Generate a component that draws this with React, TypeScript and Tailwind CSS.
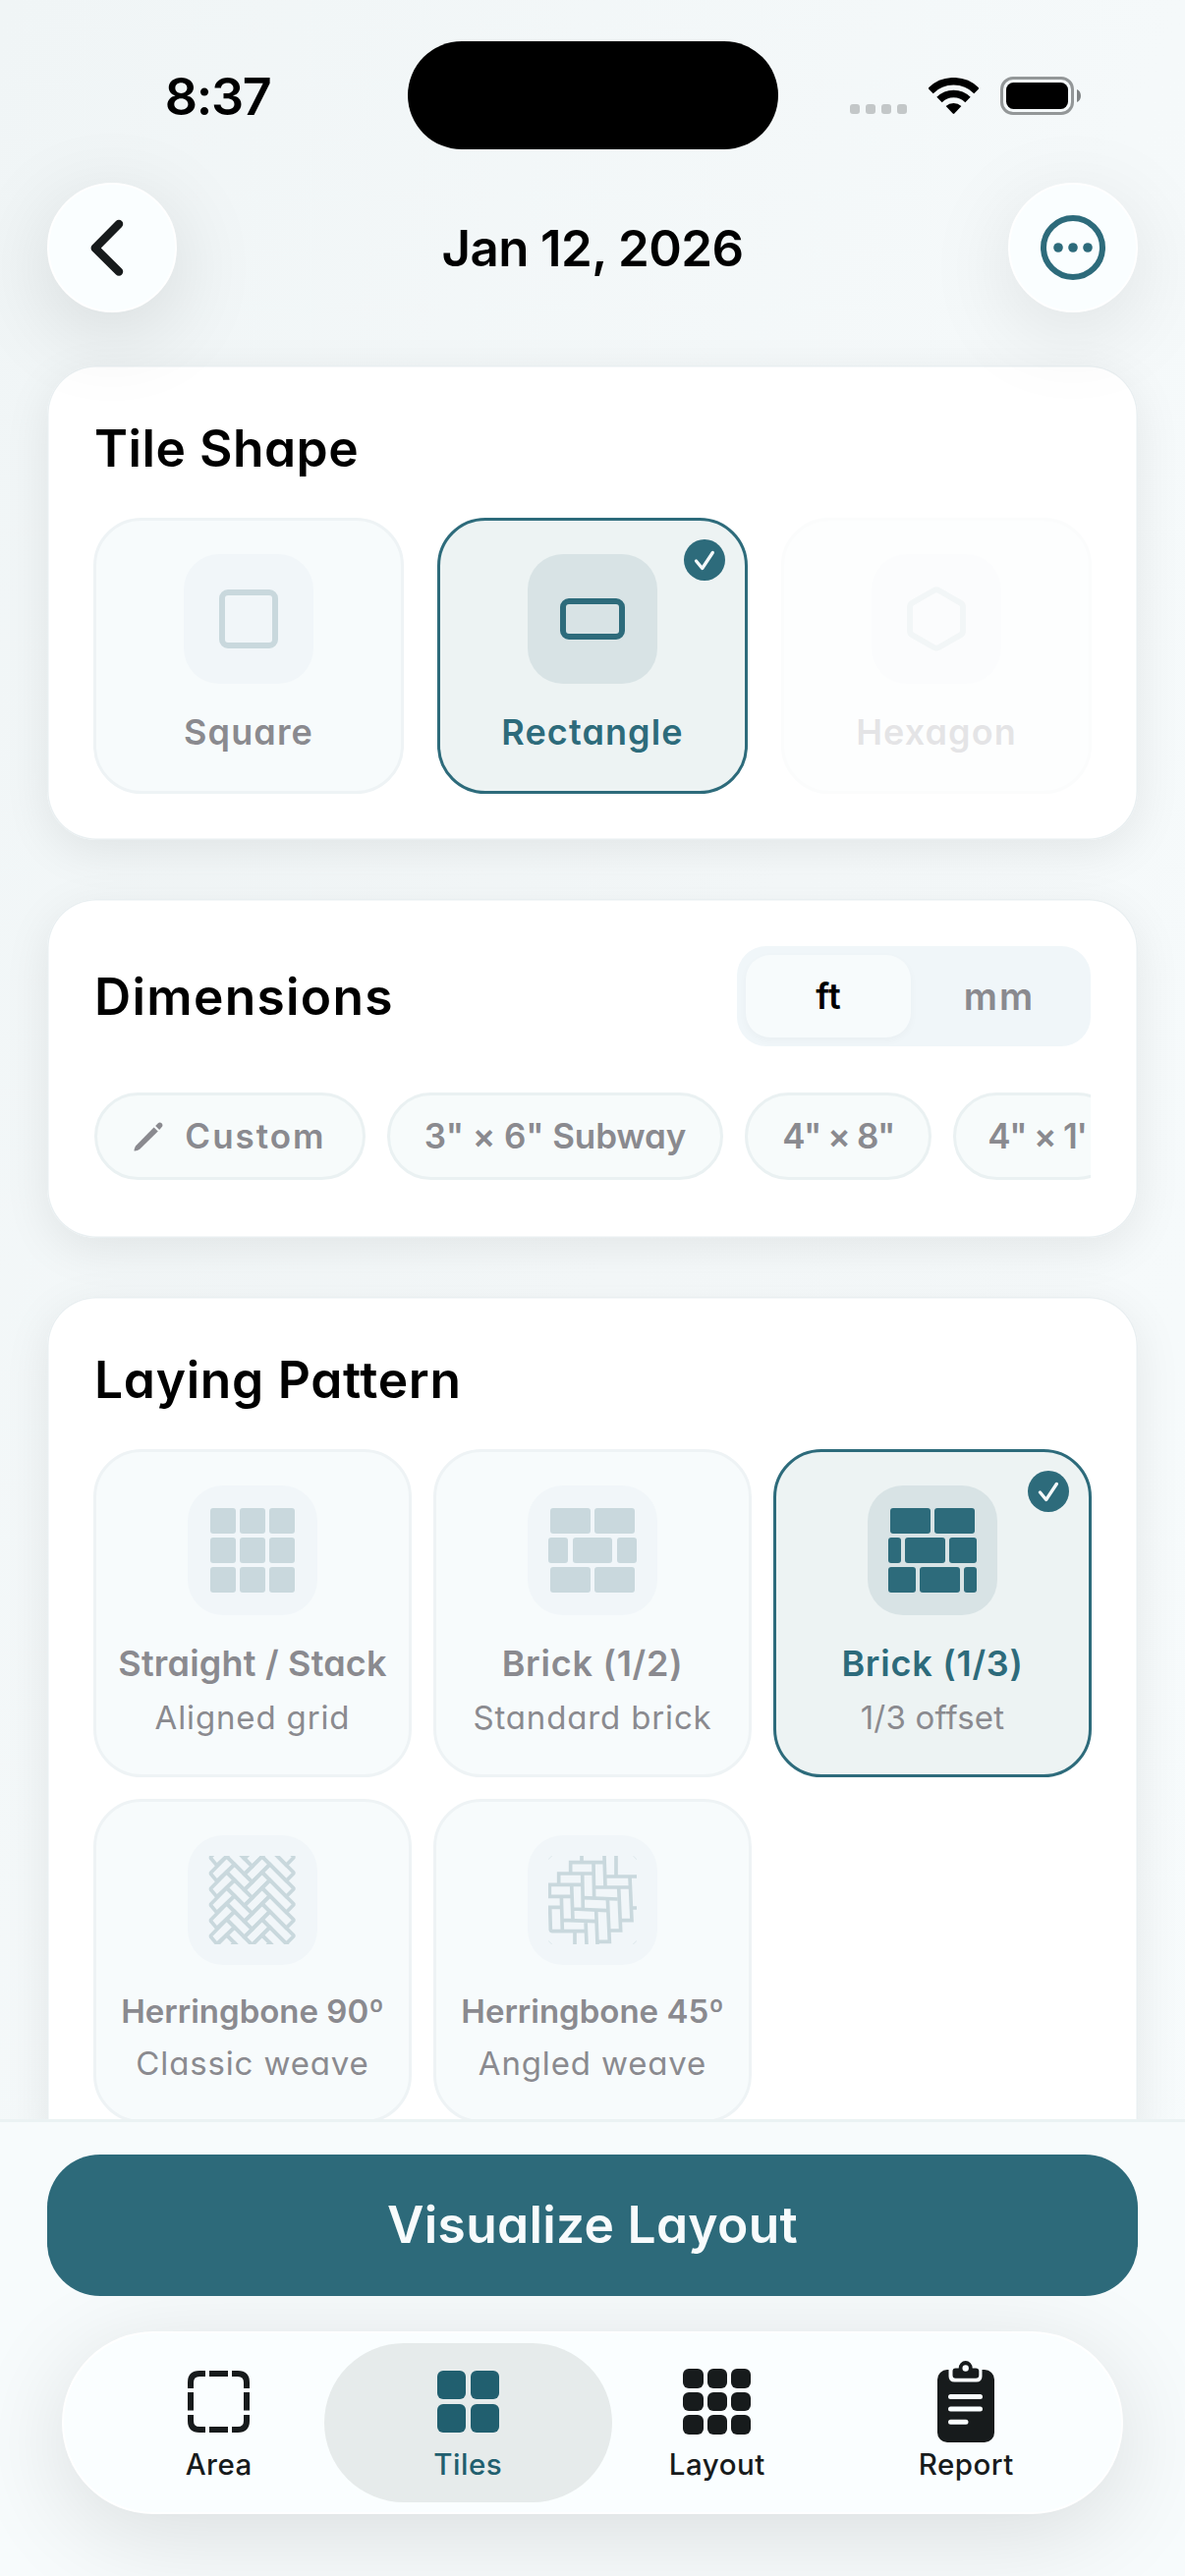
import React from 'react';
import clsx from 'clsx';

const StatusBar = () => (
  <div className="h-[186px] flex items-start relative">
    <div className="w-[415px] h-[196px] flex justify-center pl-[28px]">
      <span className="text-[52px] leading-[197px] font-semibold tracking-[-1.3px]">8:37</span>
    </div>
    <div className="mt-[42px] w-[377px] h-[110px] rounded-[55px] bg-black"></div>
    <div className="ml-[73px] mt-[78px] h-[39px] flex items-center">
      <div className="flex gap-[6px] mt-[27px]">
        {[0, 1, 2, 3].map((dot) => (
          <div key={dot} className="w-[10px] h-[10px] rounded-[3px] bg-[#c3c7c8]"></div>
        ))}
      </div>
      <svg className="ml-[22px]" width="51" height="38" viewBox="0 0 51 38" fill="none">
        <path d="M2 13.5A33.2 33.2 0 0 1 49 13.5" stroke="#000" strokeWidth="7.6" />
        <path d="M11 22.5A20.5 20.5 0 0 1 40 22.5" stroke="#000" strokeWidth="7.6" />
        <path d="M17.6 29.1A11.7 11.7 0 0 1 33.4 29.1L26.3 36.6Q25.5 37.4 24.7 36.6Z" fill="#000" />
      </svg>
      <svg className="ml-[22px]" width="83" height="39" viewBox="0 0 83 39">
        <rect x="1.5" y="1.5" width="72" height="36" rx="11.5" fill="none" stroke="#939798" strokeWidth="3" />
        <rect x="6" y="6" width="63" height="27" rx="7.5" fill="#000" />
        <path d="M78 13C83.3 14.5 83.3 24.5 78 26Z" fill="#7f8384" />
      </svg>
    </div>
  </div>
);

const Header = () => (
  <header className="relative z-10 shrink-0 h-[318px]">
    <StatusBar />
    <div className="h-[132px] px-12 flex items-center justify-between">
      <button className="w-[132px] h-[132px] rounded-full bg-[#fafeff] flex items-center justify-center border-2 border-white shadow-[0_20px_90px_rgba(0,0,0,0.12)]">
        <svg className="-ml-[10px]" width="34" height="58" viewBox="0 0 34 58" fill="none">
          <path d="M29 5L4.8 29.5L29 53.5" stroke="#171b1c" strokeWidth="8.5" strokeLinecap="round" strokeLinejoin="round" />
        </svg>
      </button>
      <h1 className="text-[51px] leading-[132px] pt-[2px] font-semibold tracking-[-0.6px]">Jan 12, 2026</h1>
      <button className="w-[132px] h-[132px] rounded-full bg-[#fafeff] flex items-center justify-center border-2 border-white shadow-[0_20px_90px_rgba(0,0,0,0.1)]">
        <svg width="66" height="66" viewBox="0 0 66 66">
          <circle cx="33" cy="33" r="30" fill="none" stroke="#2d6b7b" strokeWidth="6" />
          <circle cx="18" cy="33" r="4.8" fill="#2d6b7b" />
          <circle cx="33" cy="33" r="4.8" fill="#2d6b7b" />
          <circle cx="48" cy="33" r="4.8" fill="#2d6b7b" />
        </svg>
      </button>
    </div>
  </header>
);

type CardProps = { children: React.ReactNode };

const Card = ({ children }: CardProps) => (
  <section className="bg-white rounded-[50px] p-12 shadow-[inset_0_0_0_1.5px_#e9eff1,0_12px_48px_rgba(0,0,0,0.08)]">
    {children}
  </section>
);

const CheckBadge = () => (
  <svg className="absolute top-[21px] right-[22px]" width="42" height="42" viewBox="0 0 42 42" fill="none">
    <circle cx="21" cy="21" r="21" fill="#2d6b7b" />
    <path d="M12.5 22L18.7 29.5L29.3 13.5" stroke="#f4f9fa" strokeWidth="3.3" strokeLinecap="round" strokeLinejoin="round" />
  </svg>
);

type OptionProps = {
  label: string;
  caption?: string;
  icon: React.ReactNode;
  selected?: boolean;
  disabled?: boolean;
  labelClass?: string;
  captionClass?: string;
};

const Option = ({ label, caption, icon, selected, disabled, labelClass, captionClass }: OptionProps) => (
  <button
    className={clsx(
      'relative flex flex-col items-center py-9 rounded-[48px] outline-[3px] outline-solid outline-offset-[-2px]',
      selected ? 'bg-[#edf3f3] outline-[#2d6b7b]' : 'bg-[#f7fbfc] outline-[#eef3f5]',
      disabled && 'opacity-[0.22]'
    )}
  >
    <div
      className={clsx(
        'w-[132px] h-[132px] rounded-[36px] flex items-center justify-center',
        selected ? 'bg-[#d8e3e5] text-[#2d6b7b]' : 'bg-[#f1f6f9] text-[#c9d8dd]'
      )}
    >
      {icon}
    </div>
    <span
      className={clsx(
        'mt-[23px] font-semibold whitespace-nowrap',
        labelClass || 'text-[36px] leading-[52px] tracking-[1.1px]',
        selected ? 'text-[#2d6b7b]' : 'text-[#8a8a8f]'
      )}
    >
      {label}
    </span>
    {caption && (
      <span
        className={clsx(
          'mt-[5px] text-[33px] leading-[48px] text-[#8a8a8f] whitespace-nowrap',
          captionClass || 'tracking-[0.85px]'
        )}
      >
        {caption}
      </span>
    )}
    {selected && <CheckBadge />}
  </button>
);

const SquareIcon = () => <div className="w-[60px] h-[60px] rounded-[9px] border-[6px] border-current"></div>;

const RectangleIcon = () => <div className="w-[66px] h-[42px] rounded-[9px] border-[6px] border-current"></div>;

const HexagonIcon = () => (
  <svg width="60" height="66" viewBox="0 0 60 66" fill="none">
    <path
      d="M27.5 4Q30 2.6 32.5 4L54.5 16.6Q57 18 57 21V45Q57 48 54.5 49.4L32.5 62Q30 63.4 27.5 62L5.5 49.4Q3 48 3 45V21Q3 18 5.5 16.6Z"
      stroke="currentColor"
      strokeWidth="6"
    />
  </svg>
);

// Each row is a list of [x, width] pairs on a 90 unit wide grid
const BrickIcon = ({ rows }: { rows: number[][][] }) => (
  <svg width="90" height="90" viewBox="0 0 90 90" fill="currentColor">
    {rows.map((row, i) =>
      row.map(([x, width]) => <rect key={`${i}-${x}`} x={x} y={2 + i * 30} width={width} height="26" rx="3" />)
    )}
  </svg>
);

const stackRow = [[2, 26], [32, 26], [62, 26]];
const evenRow = [[2, 41], [47, 41]];
const halfRow = [[0, 20], [25, 40], [70, 20]];

const Herringbone90Icon = () => {
  const steps = [-2, -1, 0, 1, 2, 3, 4, 5];
  return (
    <svg width="90" height="90" viewBox="0 0 270 270" fill="none" stroke="currentColor" strokeWidth="11">
      <defs>
        <clipPath id="weave">
          <rect x="2" y="0" width="264" height="270" />
        </clipPath>
      </defs>
      <g clipPath="url(#weave)">
        {steps.map((n) => (
          <g key={n} transform={`translate(2 ${n * 48})`}>
            <path d="M4 53L54 2L78 26L24 77Z" />
            <path d="M54 50L78 26L132 80L108 104Z" />
            <path d="M108 56L162 2L186 26L132 80Z" />
            <path d="M162 50L186 26L260 100L236 124Z" />
          </g>
        ))}
      </g>
    </svg>
  );
};

const Herringbone45Icon = () => (
  <svg width="90" height="90" viewBox="0 0 270 270" fill="none" stroke="currentColor" strokeWidth="11">
    <path d="M102 0V20M171 0L174 95M207 0V60M68 54V20H174M138 20L140 128M32 88V54H138M104 54L106 164" />
    <path d="M0 88H106M4 84V124H76M71 86L75 196M174 63H270M140 96H252M106 128L212 132M74 162L180 167" />
    <path d="M42 196L146 200M0 157H40M40 124L43 230M5 156L7 226Q8 230 12 230H115M114 196L117 270M81 232V270" />
    <path d="M146 164L150 270M181 130L187 262H150M215 96L221 228H188M249 65L255 197H220M254 159H270" />
    <path d="M0 11L11 0M259 0L270 11M0 259L11 270M259 270L270 259" strokeWidth="1.5" />
  </svg>
);

const TileShape = () => (
  <Card>
    <h2 className="text-[51.5px] leading-[72px] font-semibold tracking-[0.5px]">Tile Shape</h2>
    <div className="mt-9 grid grid-cols-3 gap-9">
      <Option label="Square" icon={<SquareIcon />} />
      <Option label="Rectangle" icon={<RectangleIcon />} selected />
      <Option label="Hexagon" icon={<HexagonIcon />} disabled />
    </div>
  </Card>
);

const PencilIcon = () => (
  <svg width="30" height="30" viewBox="0 0 30 30" fill="#8a8a8f">
    <path d="M0.6 29.4C0.2 28.8 1.3 25.2 2.2 24.2L20.6 5.4L24.8 9.5L6.2 27.8C5.2 28.7 1.3 29.9 0.6 29.4Z" />
    <path d="M22.2 3.9L24.9 1.2C26 0.1 27.4 0.2 28.5 1.2C29.7 2.4 29.8 3.9 28.8 5L26.2 7.9Z" />
  </svg>
);

const chipClass =
  'shrink-0 h-[89px] rounded-full border-[3px] border-[#eaf1f2] bg-[#f7fbfb] flex items-center justify-center text-[35px] font-semibold text-[#8a8a8f] whitespace-nowrap';

const Dimensions = () => (
  <Card>
    <div className="h-[102px] flex items-center justify-between">
      <h2 className="text-[51.5px] leading-[72px] font-semibold tracking-[1.3px]">Dimensions</h2>
      <div className="w-[360px] h-[102px] p-[9px] rounded-[30px] bg-[#f0f6f9] flex text-[36px] font-semibold">
        <div className="w-[168px] rounded-[25px] bg-[#f7fbfc] flex items-center justify-center shadow-[0_3px_9px_rgba(0,0,0,0.03)]">
          ft
        </div>
        <div className="flex-1 pl-[6px] flex items-center justify-center text-[38px] tracking-[2px] text-[#8a8a8f]">
          mm
        </div>
      </div>
    </div>
    <div className="mt-[47px] mb-[11px] flex gap-[22px] overflow-hidden">
      <div className={clsx(chipClass, 'w-[276px] gap-[22px] tracking-[2px]')}>
        <PencilIcon />
        Custom
      </div>
      <div className={clsx(chipClass, 'w-[342px] tracking-[-0.1px]')}>3" × 6" Subway</div>
      <div className={clsx(chipClass, 'w-[190px] tracking-[-1.4px]')}>4" × 8"</div>
      <div className={clsx(chipClass, 'w-[171px] tracking-[-1.2px]')}>4" × 1'</div>
    </div>
  </Card>
);

const LayingPattern = () => (
  <Card>
    <h2 className="text-[51.5px] leading-[72px] font-semibold tracking-[0.7px]">Laying Pattern</h2>
    <div className="mt-9 grid grid-cols-3 gap-6">
      <Option
        label="Straight / Stack"
        caption="Aligned grid"
        icon={<BrickIcon rows={[stackRow, stackRow, stackRow]} />}
        labelClass="text-[36px] leading-[52px] tracking-[0.2px]"
      />
      <Option
        label="Brick (1/2)"
        caption="Standard brick"
        icon={<BrickIcon rows={[evenRow, halfRow, evenRow]} />}
        labelClass="text-[36px] leading-[52px] tracking-[0.75px]"
      />
      <Option
        label="Brick (1/3)"
        caption="1/3 offset"
        icon={<BrickIcon rows={[evenRow, [[0, 13], [17, 41], [62, 28]], [[0, 28], [32, 41], [77, 13]]]} />}
        labelClass="text-[36px] leading-[52px] tracking-[0.75px]"
        captionClass="tracking-[0.2px]"
        selected
      />
      <Option
        label="Herringbone 90º"
        caption="Classic weave"
        icon={<Herringbone90Icon />}
        labelClass="text-[33px] leading-[48px]"
      />
      <Option
        label="Herringbone 45º"
        caption="Angled weave"
        icon={<Herringbone45Icon />}
        labelClass="text-[33px] leading-[48px]"
      />
    </div>
  </Card>
);

const AreaIcon = () => (
  <svg width="63" height="63" viewBox="0 0 63 63" fill="none" stroke="currentColor" strokeWidth="6">
    <path d="M3 18V12Q3 3 12 3H18M45 3H51Q60 3 60 12V18M60 45V51Q60 60 51 60H45M18 60H12Q3 60 3 51V45" />
    <path d="M22 3H41M22 60H41M3 22V40.5M60 22V40.5" />
  </svg>
);

const TilesIcon = () => (
  <div className="w-[63px] h-[63px] grid grid-cols-2 gap-[5px]">
    {[0, 1, 2, 3].map((tile) => (
      <div key={tile} className="rounded-[6px] bg-current"></div>
    ))}
  </div>
);

const LayoutIcon = () => (
  <div className="w-[69px] h-[67px] grid grid-cols-3 gap-[4px]">
    {[0, 1, 2, 3, 4, 5, 6, 7, 8].map((tile) => (
      <div key={tile} className="rounded-[6px] bg-current"></div>
    ))}
  </div>
);

const ReportIcon = () => (
  <svg width="58" height="83" viewBox="0 0 58 83">
    <rect x="0" y="9" width="58" height="74" rx="10" fill="currentColor" />
    <path d="M11.5 8V15.5Q11.5 21.5 17.5 21.5H39.5Q45.5 21.5 45.5 15.5V8Z" fill="#fafeff" />
    <path d="M15.5 10.5Q15.5 7.5 18.5 7.5H21.7A7 7.5 0 0 1 35.7 7.5H39Q42.3 7.5 42.3 10.5V14.5Q42.3 17.8 39 17.8H18.5Q15.5 17.8 15.5 14.5Z" fill="currentColor" />
    <circle cx="28.7" cy="7.5" r="3.2" fill="#fafeff" />
    <path d="M13.5 36.5H43.5M13.5 49H43.5M13.5 62.3H29" stroke="#fafeff" strokeWidth="5" strokeLinecap="round" />
  </svg>
);

const tabs = [
  { name: 'Area', icon: <AreaIcon /> },
  { name: 'Tiles', icon: <TilesIcon />, active: true },
  { name: 'Layout', icon: <LayoutIcon /> },
  { name: 'Report', icon: <ReportIcon /> },
];

const TabBar = () => (
  <nav className="mx-[63px] mt-9 h-[186px] px-[31px] rounded-[93px] bg-[#fafeff] border-2 border-white flex shadow-[0_20px_100px_rgba(0,0,0,0.12)]">
    {tabs.map((tab) => (
      <div
        key={tab.name}
        className={clsx(
          'relative flex-1 flex flex-col items-center',
          tab.active ? 'text-[#215f6f]' : 'text-[#171b1c]'
        )}
      >
        {tab.active && <div className="absolute inset-y-[10px] -inset-x-[20px] rounded-[81px] bg-[#e6ebeb]"></div>}
        <div className="relative mt-[26px] h-[87px] flex items-center justify-center">{tab.icon}</div>
        <span className="relative mt-[2px] text-[29.5px] leading-[36px] font-medium tracking-[0.5px]">{tab.name}</span>
      </div>
    ))}
  </nav>
);

const App = () => {
  return (
    <div className="w-[1206px] h-[2622px] overflow-hidden flex flex-col bg-gradient-to-br from-[#f0f5f6] via-[#f5f9fa] to-[#f7fbfc] text-black font-['Inter',sans-serif]">
      <Header />

      <main className="flex-1 min-h-0 overflow-hidden px-12 pt-[54px] flex flex-col gap-[60px] [font-feature-settings:'cv11']">
        <TileShape />
        <Dimensions />
        <LayingPattern />
      </main>

      <footer className="shrink-0 h-[465px] border-t-[3px] border-[#ebf2f3] bg-[#f7fbfc] pt-[33px]">
        <button className="mx-12 w-[1110px] h-[144px] rounded-[54px] bg-[#2d6a7a] text-[#f8fbfc] text-[51.5px] font-semibold tracking-[0.3px] [font-feature-settings:'cv11']">
          Visualize Layout
        </button>
        <TabBar />
      </footer>
    </div>
  );
};

export default App;
